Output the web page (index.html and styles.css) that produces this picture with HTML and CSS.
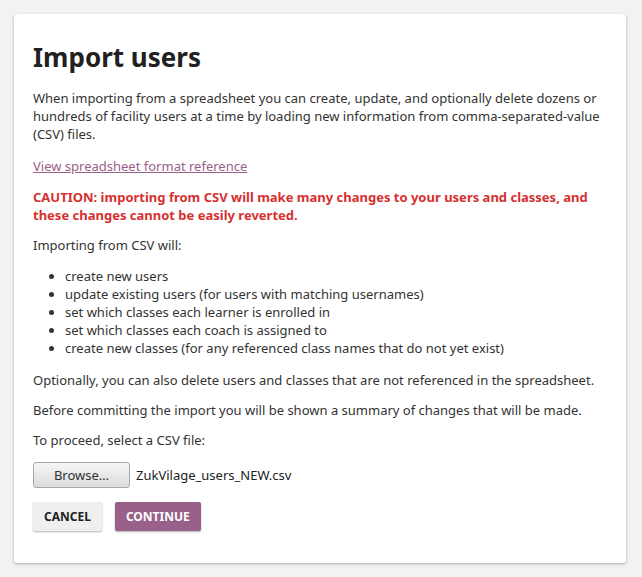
FILE: index.html
```html
<!DOCTYPE html>
<html lang="en">
<head>
<meta charset="utf-8">
<title>Import users</title>
<link rel="stylesheet" href="styles.css">
</head>
<body>
<main class="card">
  <h1 class="title">Import users</h1>
  <p class="text intro">When importing from a spreadsheet you can create, update, and optionally delete dozens or hundreds of facility users at a time by loading new information from comma-separated-value (CSV) files.</p>
  <p class="text ref"><a class="link" href="#">View spreadsheet format reference</a></p>
  <p class="text caution">CAUTION: importing from CSV will make many changes to your users and classes, and these changes cannot be easily reverted.</p>
  <p class="text lead">Importing from CSV will:</p>
  <ul class="list">
    <li>create new users</li>
    <li>update existing users (for users with matching usernames)</li>
    <li>set which classes each learner is enrolled in</li>
    <li>set which classes each coach is assigned to</li>
    <li>create new classes (for any referenced class names that do not yet exist)</li>
  </ul>
  <p class="text">Optionally, you can also delete users and classes that are not referenced in the spreadsheet.</p>
  <p class="text">Before committing the import you will be shown a summary of changes that will be made.</p>
  <p class="text">To proceed, select a CSV file:</p>
  <div class="file-row">
    <button class="browse" type="button">Browse…</button>
    <span class="file-name">ZukVilage_users_NEW.csv</span>
  </div>
  <div class="actions">
    <button class="btn btn-secondary" type="button">Cancel</button>
    <button class="btn btn-primary" type="button">Continue</button>
  </div>
</main>
</body>
</html>
```

FILE: styles.css
```css
html, body {
  margin: 0;
  padding: 0;
  background: #f2f2f2;
}

body {
  font-family: "Noto Sans", "Open Sans", sans-serif;
  font-size: 13px;
  line-height: 18px;
  color: #333333;
  padding: 14px 16px 15px 14px;
}

.card {
  width: 574px;
  background: #ffffff;
  border-radius: 3px;
  box-shadow: 0 1px 3px rgba(0, 0, 0, 0.28);
  padding: 25px 19px 32px 19px;
}

.title {
  margin: 0 0 14px 0;
  font-size: 26px;
  line-height: 36px;
  font-weight: 700;
  color: #212121;
}

.text {
  margin: 0 0 12px 0;
}

.intro {
  margin-bottom: 14px;
}

.ref {
  margin-bottom: 13px;
}

.lead {
  margin-bottom: 13px;
}

.link {
  color: #996189;
  text-decoration: underline;
}

.caution {
  color: #d6302f;
  font-weight: 700;
}

.list {
  margin: 0 0 14px 0;
  padding: 0 0 0 32px;
}

.list li {
  line-height: 18px;
}

.file-row {
  display: flex;
  align-items: center;
  gap: 6px;
  margin-top: 13px;
}

.browse {
  height: 26px;
  width: 97px;
  font-family: "Noto Sans", "Open Sans", sans-serif;
  font-size: 13px;
  color: #333333;
  background: linear-gradient(#f6f6f6, #dcdcdc);
  border: 1px solid #a8a8a8;
  border-radius: 3px;
  padding: 0;
}

.file-name {
  color: #222222;
}

.actions {
  display: flex;
  gap: 13px;
  margin-top: 14px;
}

.btn {
  height: 29px;
  padding: 0 11px;
  border: none;
  border-radius: 2px;
  font-family: "Noto Sans", "Open Sans", sans-serif;
  font-size: 12px;
  font-weight: 700;
  text-transform: uppercase;
  box-shadow: 0 1px 2px rgba(0, 0, 0, 0.3);
}

.btn-secondary {
  background: #efefef;
  color: #212121;
}

.btn-primary {
  background: #996189;
  color: #ffffff;
}
```
